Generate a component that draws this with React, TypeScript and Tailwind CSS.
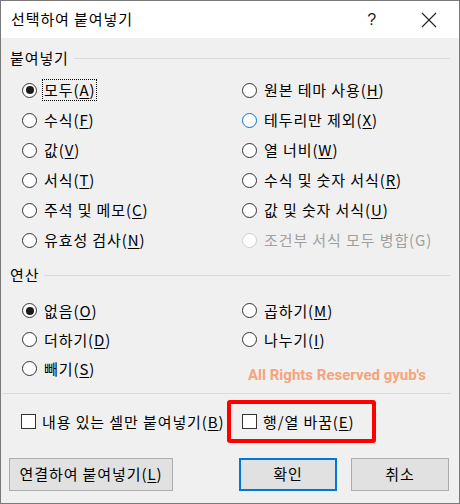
import React from "react";

type Opt = { label: string; key?: string; rest?: string; checked?: boolean; disabled?: boolean; hover?: boolean; focus?: boolean };

function Radio({ opt }: { opt: Opt }) {
  const ring = opt.disabled ? "border-[#cccccc]" : opt.hover ? "border-[#0078d7]" : "border-[#333333]";
  return (
    <div className="flex h-full items-center">
      <span className={`flex h-[15px] w-[15px] items-center justify-center rounded-full border bg-white ${ring}`}>
        {opt.checked && <span className="h-[8px] w-[8px] rounded-full bg-[#1a1a1a]" />}
      </span>
      <span
        className={`ml-[6px] leading-[20px] ${opt.disabled ? "text-[#a0a0a0]" : "text-black"} ${
          opt.focus ? "outline outline-1 outline-dotted outline-black px-[1px]" : "px-[1px]"
        }`}
      >
        {opt.label}
        {opt.key !== undefined && (
          <>
            (<u className="underline-offset-2">{opt.key}</u>){opt.rest}
          </>
        )}
      </span>
    </div>
  );
}

function Section({ title }: { title: string }) {
  return (
    <div className="flex h-[20px] items-center pl-[9px] pr-[9px]">
      <span className="leading-[20px] text-black">{title}</span>
      <div className="ml-[5px] h-px flex-1 bg-[#dadada]" />
    </div>
  );
}

function Check({ label, k }: { label: string; k: string }) {
  return (
    <div className="flex items-center">
      <span className="h-[15px] w-[15px] border border-[#333333] bg-white" />
      <span className="ml-[6px] leading-[20px] text-black">
        {label}(<u className="underline-offset-2">{k}</u>)
      </span>
    </div>
  );
}

const paste: [Opt, Opt][] = [
  [{ label: "모두", key: "A", checked: true, focus: true }, { label: "원본 테마 사용", key: "H" }],
  [{ label: "수식", key: "F" }, { label: "테두리만 제외", key: "X", hover: true }],
  [{ label: "값", key: "V" }, { label: "열 너비", key: "W" }],
  [{ label: "서식", key: "T" }, { label: "수식 및 숫자 서식", key: "R" }],
  [{ label: "주석 및 메모", key: "C" }, { label: "값 및 숫자 서식", key: "U" }],
  [{ label: "유효성 검사", key: "N" }, { label: "조건부 서식 모두 병합(G)", disabled: true }],
];

export default function App() {
  return (
    <div
      className="flex h-[504px] w-[460px] flex-col border border-[#7a7a7a] bg-[#f0f0f0] text-[15px] tracking-[0.9px]"
      style={{ fontFamily: '"Noto Sans CJK KR", "Noto Sans", sans-serif' }}
    >
      {/* title bar */}
      <div className="flex h-[37px] items-center bg-white pl-[10px]">
        <span className="text-[15px] text-black">선택하여 붙여넣기</span>
        <span className="ml-auto mr-[44px] text-[16px] text-[#222]" style={{ fontFamily: '"Liberation Sans", sans-serif' }}>
          ?
        </span>
        <svg width="16" height="16" viewBox="0 0 16 16" className="mr-[22px]">
          <path d="M1 1 L15 15 M15 1 L1 15" stroke="#222" strokeWidth="1.1" fill="none" />
        </svg>
      </div>

      <div className="mt-[10px]">
        <Section title="붙여넣기" />
      </div>
      <div className="mt-[7px] grid grid-cols-[220px_1fr] pl-[21px]">
        {paste.map(([a, b], i) => (
          <React.Fragment key={i}>
            <div className="h-[30px]">
              <Radio opt={a} />
            </div>
            <div className="h-[30px]">
              <Radio opt={b} />
            </div>
          </React.Fragment>
        ))}
      </div>

      <div className="mt-[10px]">
        <Section title="연산" />
      </div>
      <div className="mt-[11px] grid grid-cols-[220px_1fr] pl-[21px]">
        <div className="h-[29px]">
          <Radio opt={{ label: "없음", key: "O", checked: true }} />
        </div>
        <div className="h-[29px]">
          <Radio opt={{ label: "곱하기", key: "M" }} />
        </div>
        <div className="h-[29px]">
          <Radio opt={{ label: "더하기", key: "D" }} />
        </div>
        <div className="h-[29px]">
          <Radio opt={{ label: "나누기", key: "I" }} />
        </div>
        <div className="h-[29px]">
          <Radio opt={{ label: "빼기", key: "S" }} />
        </div>
        <div className="relative h-[29px]">
          <span
            className="absolute left-[6px] top-[11px] whitespace-nowrap text-[15px] font-bold leading-[20px] tracking-normal text-[#f5a47c]"
            style={{ fontFamily: "Roboto, sans-serif" }}
          >
            All Rights Reserved gyub's
          </span>
        </div>
      </div>

      <div className="ml-[1px] mr-[8px] mt-[10px] h-px bg-[#dadada]" />

      <div className="mt-[6px] flex h-[43px] items-center pl-[20px]">
        <div className="w-[206px]">
          <Check label="내용 있는 셀만 붙여넣기" k="B" />
        </div>
        <div className="flex h-[43px] w-[149px] items-center rounded-[3px] border-4 border-[#ff0000] pl-[11px]">
          <Check label="행/열 바꿈" k="E" />
        </div>
      </div>

      <div className="mt-[15px] flex pl-[8px]">
        <button className="flex h-[33px] w-[164px] items-center justify-center border border-[#adadad] bg-[#e1e1e1] text-black">
          연결하여 붙여넣기(<u className="underline-offset-2">L</u>)
        </button>
        <button className="ml-[66px] flex h-[33px] w-[98px] items-center justify-center border-2 border-[#0078d7] bg-[#e1e1e1] text-black">
          확인
        </button>
        <button className="ml-[14px] flex h-[33px] w-[98px] items-center justify-center border border-[#adadad] bg-[#e1e1e1] text-black">
          취소
        </button>
      </div>
    </div>
  );
}
